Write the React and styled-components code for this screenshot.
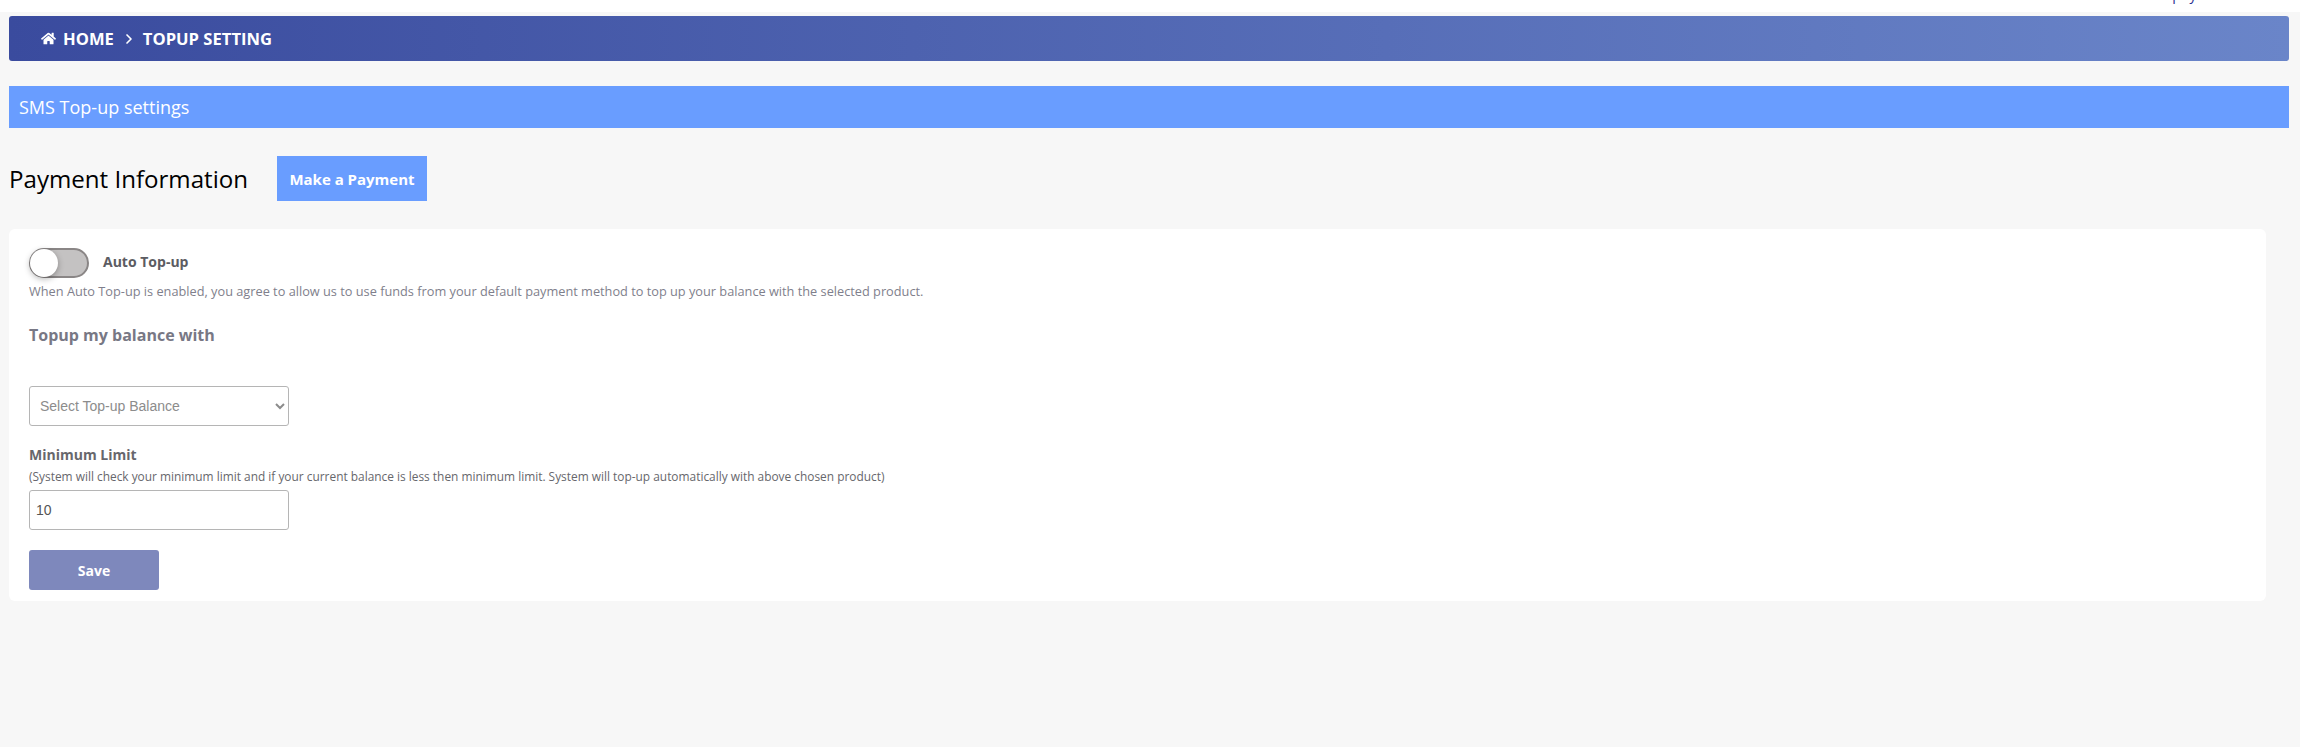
import React from "react";
import styled, { createGlobalStyle } from "styled-components";
import { FaHome } from "react-icons/fa";
import { LuChevronRight } from "react-icons/lu";

const Global = createGlobalStyle`
  html, body { margin: 0; padding: 0; background: #f7f7f7; overflow: hidden; }
  body { font-family: "Open Sans", "Noto Sans", sans-serif; }
  * { box-sizing: border-box; }
`;

const Page = styled.div`
  width: 2300px;
  height: 747px;
  overflow: hidden;
  background: #f7f7f7;
`;

const TopStrip = styled.div`
  height: 12px;
  background: #fff;
  overflow: hidden;
  display: flex;
  justify-content: flex-end;
  padding-right: 103px;
`;

const TopText = styled.span`
  font-size: 14px;
  line-height: 14px;
  margin-top: -12px;
  letter-spacing: 0.5px;
  color: #2b2f8f;
`;

const Content = styled.div`
  padding: 4px 11px 0 9px;
`;

const Breadcrumb = styled.nav`
  height: 45px;
  display: flex;
  align-items: center;
  padding-left: 32px;
  border-radius: 3px;
  background: linear-gradient(90deg, #3a4b9e 0%, #6a85c9 100%);
  color: #fff;
  font-size: 16.6px;
  font-weight: 700;
`;

const Crumb = styled.span`
  display: inline-flex;
  align-items: center;
  gap: 7px;
  margin-top: -1px;
`;

const Separator = styled.span`
  display: inline-flex;
  margin: 0 6px 0 7px;
`;

const SectionBar = styled.div`
  margin-top: 25px;
  height: 42px;
  display: flex;
  align-items: center;
  padding-left: 10px;
  background: #699dff;
  color: #fff;
  font-size: 18px;
`;

const PaymentRow = styled.div`
  margin-top: 28px;
  height: 45px;
  display: flex;
  align-items: center;
  gap: 30px;
`;

const PaymentTitle = styled.h2`
  margin: 0;
  width: 238px;
  font-size: 24.1px;
  font-weight: 400;
  color: #000;
  white-space: nowrap;
`;

const PayButton = styled.button`
  width: 150px;
  height: 45px;
  border: 0;
  background: #699dff;
  color: #fff;
  font: 700 15px "Open Sans", sans-serif;
`;

const Card = styled.section`
  margin-top: 28px;
  width: 2257px;
  height: 372px;
  padding: 19px 20px 0;
  background: #fff;
  border-radius: 6px;
`;

const ToggleRow = styled.div`
  height: 30px;
  display: flex;
  align-items: center;
  gap: 14px;
`;

const Track = styled.span`
  position: relative;
  display: block;
  width: 60px;
  height: 30px;
  border-radius: 15px;
  background: #c4c2c2;
  border: 2px solid #8a8686;
`;

const Knob = styled.span`
  position: absolute;
  left: -1px;
  top: -1px;
  width: 28px;
  height: 28px;
  border-radius: 50%;
  background: #fff;
  box-shadow: 0 2px 6px rgba(0, 0, 0, 0.3);
`;

const ToggleLabel = styled.span`
  margin-bottom: 4px;
  font-size: 14px;
  font-weight: 700;
  color: #5c5c62;
`;

const Hint = styled.p`
  margin: 3px 0 0;
  font-size: 12.75px;
  line-height: 20px;
  color: #7f7f8c;
`;

const SubHeading = styled.h3`
  margin: 23px 0 0;
  font-size: 16px;
  line-height: 22px;
  font-weight: 700;
  color: #787885;
`;

const SelectBox = styled.select`
  display: block;
  margin-top: 40px;
  width: 260px;
  height: 40px;
  padding: 0 6px;
  background: #fff;
  border: 1px solid #b5b5b5;
  border-radius: 3px;
  color: #8c8c8c;
  font: 14px "Liberation Sans", sans-serif;
`;

const FieldLabel = styled.label`
  display: block;
  margin-top: 19px;
  font-size: 14px;
  line-height: 20px;
  font-weight: 700;
  color: #67676c;
`;

const NoteText = styled.p`
  margin: 3px 0 0;
  font-size: 11.9px;
  line-height: 16px;
  color: #67676c;
`;

const NumberField = styled.input`
  display: block;
  margin-top: 6px;
  width: 260px;
  height: 40px;
  padding: 0 6px;
  border: 1px solid #b5b5b5;
  border-radius: 3px;
  color: #555;
  font: 14px "Liberation Sans", sans-serif;
`;

const SaveButton = styled.button`
  display: block;
  margin-top: 20px;
  width: 130px;
  height: 40px;
  border: 0;
  border-radius: 3px;
  background: #7e88bc;
  color: #fff;
  font: 700 14px "Open Sans", sans-serif;
`;

export default function App() {
  return (
    <Page>
      <Global />
      <TopStrip>
        <TopText>pay</TopText>
      </TopStrip>
      <Content>
        <Breadcrumb>
          <Crumb><FaHome size={15} />HOME</Crumb>
          <Separator><LuChevronRight size={16} strokeWidth={2.5} /></Separator>
          <Crumb>TOPUP SETTING</Crumb>
        </Breadcrumb>
        <SectionBar>SMS Top-up settings</SectionBar>
        <PaymentRow>
          <PaymentTitle>Payment Information</PaymentTitle>
          <PayButton>Make a Payment</PayButton>
        </PaymentRow>
        <Card>
          <ToggleRow>
            <Track><Knob /></Track>
            <ToggleLabel>Auto Top-up</ToggleLabel>
          </ToggleRow>
          <Hint>When Auto Top-up is enabled, you agree to allow us to use funds from your default payment method to top up your balance with the selected product.</Hint>
          <SubHeading>Topup my balance with</SubHeading>
          <SelectBox defaultValue="">
            <option value="">Select Top-up Balance</option>
          </SelectBox>
          <FieldLabel>Minimum Limit</FieldLabel>
          <NoteText>(System will check your minimum limit and if your current balance is less then minimum limit. System will top-up automatically with above chosen product)</NoteText>
          <NumberField defaultValue="10" />
          <SaveButton>Save</SaveButton>
        </Card>
      </Content>
    </Page>
  );
}
